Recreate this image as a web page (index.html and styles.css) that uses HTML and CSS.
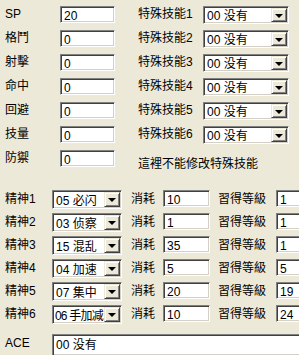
FILE: index.html
```html
<!DOCTYPE html>
<html>
<head>
<meta charset="utf-8">
<link rel="stylesheet" href="styles.css">
</head>
<body>
<div class="page">
  <div class="top">
    <div class="row"><span class="lbl l1">SP</span><div class="edit e1">20</div><span class="lbl l2">特殊技能1</span><div class="combo c1"><span class="txt">00 没有</span><span class="btn"><i class="tri"></i></span></div></div>
    <div class="row"><span class="lbl l1">格鬥</span><div class="edit e1">0</div><span class="lbl l2">特殊技能2</span><div class="combo c1"><span class="txt">00 没有</span><span class="btn"><i class="tri"></i></span></div></div>
    <div class="row"><span class="lbl l1">射擊</span><div class="edit e1">0</div><span class="lbl l2">特殊技能3</span><div class="combo c1"><span class="txt">00 没有</span><span class="btn"><i class="tri"></i></span></div></div>
    <div class="row"><span class="lbl l1">命中</span><div class="edit e1">0</div><span class="lbl l2">特殊技能4</span><div class="combo c1"><span class="txt">00 没有</span><span class="btn"><i class="tri"></i></span></div></div>
    <div class="row"><span class="lbl l1">回避</span><div class="edit e1">0</div><span class="lbl l2">特殊技能5</span><div class="combo c1"><span class="txt">00 没有</span><span class="btn"><i class="tri"></i></span></div></div>
    <div class="row"><span class="lbl l1">技量</span><div class="edit e1">0</div><span class="lbl l2">特殊技能6</span><div class="combo c1"><span class="txt">00 没有</span><span class="btn"><i class="tri"></i></span></div></div>
    <div class="row"><span class="lbl l1">防禦</span><div class="edit e1">0</div><span class="note">這裡不能修改特殊技能</span></div>
  </div>
  <div class="bottom">
    <div class="brow"><span class="lbl b1">精神1</span><div class="combo c2"><span class="txt">05 必闪</span><span class="btn"><i class="tri"></i></span></div><span class="lbl b2">消耗</span><div class="edit e2">10</div><span class="lbl b3">習得等級</span><div class="edit e3">1</div></div>
    <div class="brow"><span class="lbl b1">精神2</span><div class="combo c2"><span class="txt">03 侦察</span><span class="btn"><i class="tri"></i></span></div><span class="lbl b2">消耗</span><div class="edit e2">1</div><span class="lbl b3">習得等級</span><div class="edit e3">1</div></div>
    <div class="brow"><span class="lbl b1">精神3</span><div class="combo c2"><span class="txt">15 混乱</span><span class="btn"><i class="tri"></i></span></div><span class="lbl b2">消耗</span><div class="edit e2">35</div><span class="lbl b3">習得等級</span><div class="edit e3">1</div></div>
    <div class="brow"><span class="lbl b1">精神4</span><div class="combo c2"><span class="txt">04 加速</span><span class="btn"><i class="tri"></i></span></div><span class="lbl b2">消耗</span><div class="edit e2">5</div><span class="lbl b3">習得等級</span><div class="edit e3">5</div></div>
    <div class="brow"><span class="lbl b1">精神5</span><div class="combo c2"><span class="txt">07 集中</span><span class="btn"><i class="tri"></i></span></div><span class="lbl b2">消耗</span><div class="edit e2">20</div><span class="lbl b3">習得等級</span><div class="edit e3">19</div></div>
    <div class="brow"><span class="lbl b1">精神6</span><div class="combo c2"><span class="txt tight">06 手加减</span><span class="btn"><i class="tri"></i></span></div><span class="lbl b2">消耗</span><div class="edit e2">10</div><span class="lbl b3">習得等級</span><div class="edit e3">24</div></div>
  </div>
  <div class="ace"><span class="lbl b1">ACE</span><div class="edit e4">00 没有</div></div>
</div>
</body>
</html>
```
FILE: styles.css
```css
html, body {
  margin: 0;
  padding: 0;
  background: #ECE9D8;
  overflow: hidden;
}
.page {
  width: 299px;
  height: 355px;
  overflow: hidden;
  font-family: "Liberation Sans", "Noto Sans CJK SC", sans-serif;
  font-size: 12px;
  line-height: 14px;
  color: #000;
  padding-left: 5px;
  box-sizing: border-box;
}
.top {
  padding-top: 6px;
  display: flex;
  flex-direction: column;
  gap: 6px;
}
.row {
  display: flex;
  align-items: flex-start;
  height: 18px;
  white-space: nowrap;
}
.lbl {
  display: block;
  flex: none;
  padding-top: 1px;
}
.l1 { width: 55px; }
.l2 { width: 65px; margin-left: 23px; }
.note { margin-left: 23px; padding-top: 7px; flex: none; }

.edit {
  flex: none;
  box-sizing: border-box;
  background: #fff;
  border-top: 1px solid #808080;
  border-left: 1px solid #808080;
  border-right: 1px solid #fff;
  border-bottom: 1px solid #fff;
  box-shadow: inset 1px 1px 0 #404040, inset -1px -1px 0 #D4D0C8;
  padding: 0 3px;
  line-height: 14px;
  padding-top: 2px;
  overflow: hidden;
  white-space: nowrap;
}
.e1 { width: 55px; height: 17px; }

.combo {
  flex: none;
  box-sizing: border-box;
  display: flex;
  align-items: stretch;
  background: #fff;
  border-top: 1px solid #808080;
  border-left: 1px solid #808080;
  border-right: 1px solid #fff;
  border-bottom: 1px solid #fff;
  box-shadow: inset 1px 1px 0 #404040, inset -1px -1px 0 #D4D0C8;
  padding: 1px;
  white-space: nowrap;
}
.combo .txt {
  flex: 1;
  min-width: 0;
  padding-left: 2px;
  padding-top: 1px;
  overflow: hidden;
}
.combo .txt.tight {
  padding-left: 1px;
  letter-spacing: -0.8px;
}
.combo .btn {
  flex: none;
  width: 16px;
  box-sizing: border-box;
  background: #ECE9D8;
  border-top: 1px solid #ECE9D8;
  border-left: 1px solid #ECE9D8;
  border-right: 1px solid #404040;
  border-bottom: 1px solid #404040;
  box-shadow: inset 1px 1px 0 #fff, inset -1px -1px 0 #808080;
  display: flex;
  align-items: center;
  justify-content: center;
}
.tri {
  display: block;
  width: 0;
  height: 0;
  border-left: 4px solid transparent;
  border-right: 4px solid transparent;
  border-top: 4px solid #000;
  margin-top: 1px;
}
.c1 { width: 86px; height: 18px; }

.bottom {
  margin-top: 22px;
  display: flex;
  flex-direction: column;
  gap: 4px;
}
.brow {
  display: flex;
  align-items: flex-start;
  height: 19px;
  white-space: nowrap;
}
.b1 { width: 47px; padding-top: 2px; }
.b2 { width: 32px; margin-left: 9px; padding-top: 2px; }
.b3 { width: 58px; margin-left: 8px; padding-top: 2px; }
.c2 { width: 70px; height: 19px; }
.c2 .txt { padding-top: 2px; }
.c2 .btn { width: 16px; }
.e2 { width: 47px; height: 17px; }
.e3 { width: 40px; height: 17px; }

.ace {
  display: flex;
  align-items: flex-start;
  margin-top: 10px;
  height: 22px;
}
.e4 { width: 260px; height: 22px; padding-top: 3px; }
```
